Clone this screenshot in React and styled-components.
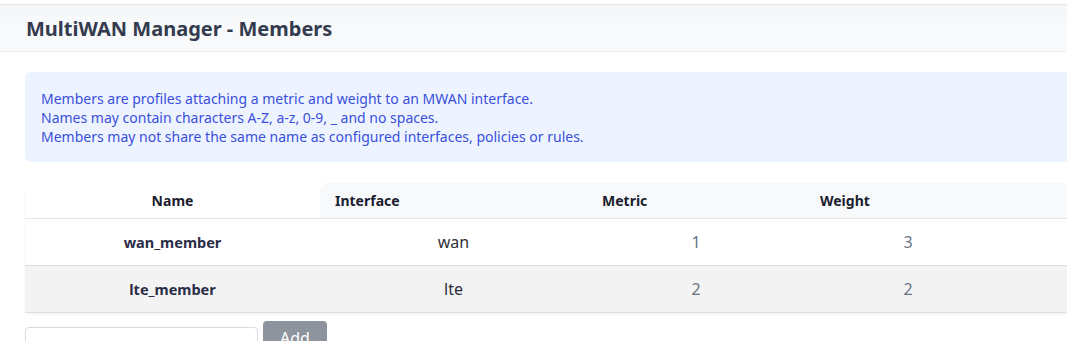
import React from "react";
import styled, { createGlobalStyle } from "styled-components";

const GlobalStyle = createGlobalStyle`
  html, body { margin: 0; padding: 0; background: #ffffff; overflow: hidden; }
  body { font-family: "Noto Sans", "Open Sans", sans-serif; }
`;

const Page = styled.div`
  width: 1140px;
  padding-top: 4px;
`;

const Heading = styled.div`
  height: 46px;
  display: flex;
  align-items: center;
  padding-left: 26px;
  background: linear-gradient(#f4f5f7, #f8f9fb 30%);
  border-top: 1px solid #e4e7eb;
  border-bottom: 1px solid #eceef1;
`;

const Title = styled.h2`
  margin: 0;
  font-size: 20px;
  font-weight: 700;
  color: #333b4e;
`;

const Content = styled.div`
  padding-left: 25px;
  display: flex;
  flex-direction: column;
`;

const Notice = styled.div`
  margin-top: 20px;
  background: #edf4ff;
  border-radius: 6px;
  padding: 17px 16px 16px;
  color: #3a4fdb;
  font-size: 14px;
  line-height: 19px;
`;

const Line = styled.div``;

const Table = styled.table`
  margin-top: 21px;
  width: 1100px;
  border-collapse: separate;
  border-spacing: 0;
  table-layout: fixed;
  border-radius: 8px;
  box-shadow: 0 1px 3px rgba(0, 0, 0, 0.06);
`;

const Th = styled.th`
  height: 35px;
  padding: 0 15px;
  font-size: 14px;
  font-weight: 700;
  color: #1b1d2e;
  text-align: ${(p) => (p.$center ? "center" : "left")};
  background: ${(p) => (p.$plain ? "#ffffff" : "#f8f9fb")};
  border-bottom: 1px solid #e3e5e9;
  &:first-child { border-top-left-radius: 8px; }
  &:nth-child(2) { border-top-left-radius: 8px; }
`;

const Tr = styled.tr`
  background: ${(p) => (p.$alt ? "#f3f3f3" : "#ffffff")};
`;

const Td = styled.td`
  height: 46px;
  padding: 0 16px;
  text-align: center;
  border-bottom: 1px solid #dedede;
  font-size: ${(p) => (p.$name ? "14.5px" : "16px")};
  font-weight: ${(p) => (p.$name ? 700 : 400)};
  color: ${(p) => (p.$name ? "#2b2d48" : p.$num ? "#6b7385" : "#2f2f38")};
`;

const Controls = styled.div`
  display: flex;
  align-items: flex-start;
  gap: 5px;
  margin-top: 8px;
`;

const Input = styled.input`
  margin-top: 6px;
  width: 233px;
  height: 34px;
  box-sizing: border-box;
  border: 1px solid #d8dbe0;
  border-radius: 4px;
`;

const Button = styled.button`
  width: 64px;
  height: 34px;
  border: none;
  border-radius: 4px;
  background: #8e949d;
  color: #ffffff;
  font-family: "Noto Sans", sans-serif;
  font-size: 16px;
  padding: 0;
`;

const members = [
  { name: "wan_member", iface: "wan", metric: 1, weight: 3 },
  { name: "lte_member", iface: "lte", metric: 2, weight: 2 },
];

export default function App() {
  return (
    <Page>
      <GlobalStyle />
      <Heading>
        <Title>MultiWAN Manager - Members</Title>
      </Heading>
      <Content>
        <Notice>
          <Line>Members are profiles attaching a metric and weight to an MWAN interface.</Line>
          <Line>Names may contain characters A-Z, a-z, 0-9, _ and no spaces.</Line>
          <Line>Members may not share the same name as configured interfaces, policies or rules.</Line>
        </Notice>
        <Table>
          <colgroup>
            <col style={{ width: 295 }} />
            <col style={{ width: 267 }} />
            <col style={{ width: 218 }} />
            <col style={{ width: 206 }} />
            <col />
          </colgroup>
          <thead>
            <tr>
              <Th $plain $center>Name</Th>
              <Th>Interface</Th>
              <Th>Metric</Th>
              <Th>Weight</Th>
              <Th></Th>
            </tr>
          </thead>
          <tbody>
            {members.map((m, i) => (
              <Tr key={m.name} $alt={i % 2 === 1}>
                <Td $name>{m.name}</Td>
                <Td>{m.iface}</Td>
                <Td $num>{m.metric}</Td>
                <Td $num>{m.weight}</Td>
                <Td></Td>
              </Tr>
            ))}
          </tbody>
        </Table>
        <Controls>
          <Input type="text" />
          <Button>Add</Button>
        </Controls>
      </Content>
    </Page>
  );
}
